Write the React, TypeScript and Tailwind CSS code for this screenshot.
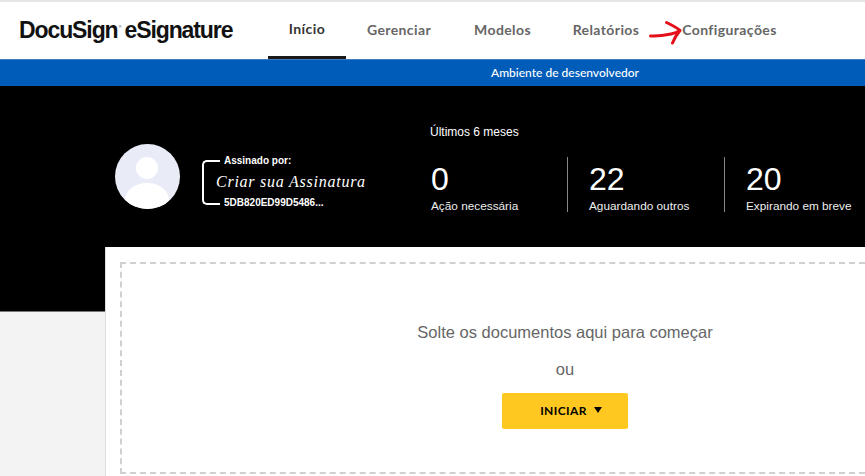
const navItems = [
  { label: 'Início', width: 'w-[78px] ml-[36px]', active: true },
  { label: 'Gerenciar', width: 'w-[64px] ml-[21px]', active: false },
  { label: 'Modelos', width: 'w-[55px] ml-[44px]', active: false },
  { label: 'Relatórios', width: 'w-[66px] ml-[43px]', active: false },
  { label: 'Configurações', width: 'w-[95px] ml-[43px]', active: false },
];

const stats = [
  { value: '0', label: 'Ação necessária', width: 'w-[138px]', border: false },
  { value: '22', label: 'Aguardando outros', width: 'w-[157px]', border: true },
  { value: '20', label: 'Expirando em breve', width: 'w-[141px]', border: true },
];

function NavBar() {
  return (
    <header className="relative flex h-[59px] items-stretch border-t-2 border-[#e6e6e6] bg-white pl-[19px]">
      <div className="flex w-[213px] shrink-0 items-center whitespace-nowrap font-['Liberation_Sans',sans-serif] text-[23px] font-bold tracking-[-1.1px] text-[#111]">
        DocuSign<span className="ml-[1px] mt-[-8px] text-[4px] font-normal tracking-normal">®</span>
        <span className="ml-[3px]">eSignature</span>
      </div>
      {navItems.map((item) => (
        <a
          key={item.label}
          className={`${item.width} flex shrink-0 items-center justify-center whitespace-nowrap pb-[2px] font-['Lato',sans-serif] text-[14px] font-bold tracking-[0.4px] ${
            item.active ? 'border-b-[3px] border-[#1a1a1a] pb-[0px] text-[#333]' : 'text-[#666]'
          }`}
        >
          {item.label}
        </a>
      ))}
      {/* seta vermelha desenhada à mão */}
      <svg className="absolute left-[648px] top-[17px]" width="34" height="26" viewBox="0 0 34 26" fill="none">
        <path
          d="M2.5 17C9 17.5 16 16.5 23 15C26 14.3 29.5 13 32 11.5C28.5 8.5 24 6 18.5 3.5M32 11.5C29 15 26.5 19 24.5 24"
          stroke="#e4111a"
          strokeWidth="3"
          strokeLinecap="round"
          strokeLinejoin="round"
        />
      </svg>
    </header>
  );
}

function SignatureBlock() {
  return (
    <div className="flex items-start">
      <div className="relative h-[65px] w-[65px] shrink-0 overflow-hidden rounded-full bg-[#e9ecf7]">
        <div className="absolute left-[21px] top-[13px] h-[22px] w-[22px] rounded-full bg-white" />
        <div className="absolute left-[10px] top-[39px] h-[34px] w-[44px] rounded-[50%] bg-white" />
      </div>
      <div className="relative ml-[22px] mt-[15px] h-[47px] w-[170px] font-['Liberation_Sans',sans-serif] text-white">
        <div className="absolute left-0 top-[1px] h-[45px] w-[18px] rounded-l-[5px] border-y-2 border-l-2 border-white" />
        <p className="absolute left-[22px] top-[-5px] whitespace-nowrap bg-black text-[10px] font-bold leading-[14px]">
          Assinado por:
        </p>
        <p className="absolute left-[14px] top-[13px] whitespace-nowrap font-['Liberation_Serif',serif] text-[16px] italic leading-[20px] tracking-[0.75px]">
          Criar sua Assinatura
        </p>
        <p className="absolute left-[22px] top-[37px] whitespace-nowrap bg-black text-[10px] font-bold leading-[14px]">
          5DB820ED99D5486...
        </p>
      </div>
    </div>
  );
}

function Stats() {
  return (
    <div className="ml-[57px] mt-[-20px] font-['Liberation_Sans',sans-serif] text-white">
      <p className="mb-[17px] ml-[1px] text-[12px] leading-[16px]">Últimos 6 meses</p>
      <div className="flex">
        {stats.map((stat) => (
          <div
            key={stat.label}
            className={`${stat.width} h-[55px] shrink-0 whitespace-nowrap ${
              stat.border ? 'border-l border-[#888] pl-[21px]' : 'pl-[2px]'
            }`}
          >
            <p className="mt-[4px] text-[32px] leading-[36px]">{stat.value}</p>
            <p className="mt-[1px] text-[11.8px] leading-[16px] text-[#eee]">{stat.label}</p>
          </div>
        ))}
      </div>
    </div>
  );
}

export default function App() {
  return (
    <div className="h-[476px] w-[865px] overflow-hidden bg-[#f3f3f3]">
      <NavBar />
      <div className="flex h-[27px] items-center justify-center border-t border-[#3f7cc4] bg-[#005cb9] pl-[265px] font-['Lato',sans-serif] text-[12px] font-medium text-white">
        Ambiente de desenvolvedor
      </div>
      <section className="h-[226px] border-b border-[#777] bg-black pl-[115px] pt-[58px]">
        <div className="flex items-start">
          <SignatureBlock />
          <Stats />
        </div>
      </section>
      <main className="relative ml-[105px] mt-[-65px] h-[229px] border-l border-[#ddd] bg-white py-[15px] pl-[14px]">
        <div className="flex h-[212px] flex-col items-center border-2 border-r-0 border-dashed border-[#d0d0d0] pl-[143px] font-['Liberation_Sans',sans-serif]">
          <p className="mt-[56px] text-[16.5px] leading-[24px] text-[#666]">Solte os documentos aqui para começar</p>
          <p className="mt-[13px] text-[16.5px] leading-[24px] text-[#666]">ou</p>
          <button
            type="button"
            className="mt-[12px] flex h-[36px] w-[126px] items-center justify-center rounded-[2px] bg-[#ffc820] pl-[12px] font-['Lato',sans-serif] text-[12px] font-bold tracking-[0.4px] text-black"
          >
            INICIAR
            <svg className="ml-[7px] mt-[-3px]" width="8" height="6" viewBox="0 0 8 6">
              <path d="M0 0H8L4 6Z" fill="#000" />
            </svg>
          </button>
        </div>
      </main>
    </div>
  );
}
